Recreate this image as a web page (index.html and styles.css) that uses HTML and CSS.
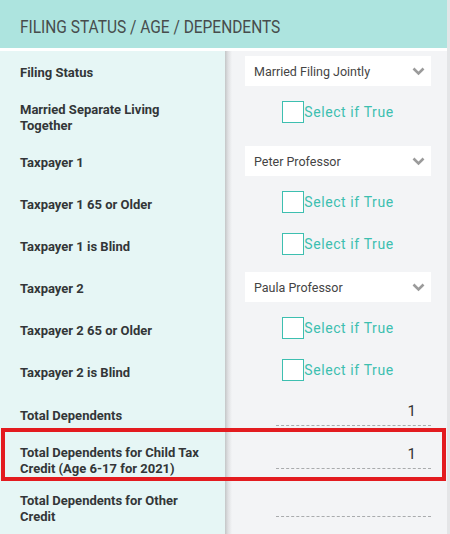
FILE: index.html
```html
<!DOCTYPE html>
<html lang="en">
<head>
    <meta charset="UTF-8">
    <meta name="viewport" content="width=device-width, initial-scale=1.0">
    <title>Filing Status</title>
    <link rel="stylesheet" href="styles.css">
</head>
<body>
    <div class="panel">
        <div class="panel-header">
            <span class="panel-title">FILING STATUS / AGE / DEPENDENTS</span>
        </div>
        <div class="panel-body">
            <div class="row">
                <div class="row-label">Filing Status</div>
                <div class="row-value">
                    <div class="dropdown">
                        <span>Married Filing Jointly</span>
                        <svg class="chevron" width="13" height="9" viewBox="0 0 13 9"><polyline points="1.5,1.5 6.5,6.5 11.5,1.5" fill="none" stroke="#9b9b9b" stroke-width="2.6"/></svg>
                    </div>
                </div>
            </div>
            <div class="row">
                <div class="row-label">Married Separate Living Together</div>
                <div class="row-value">
                    <label class="check"><span class="check-box"></span>Select if True</label>
                </div>
            </div>
            <div class="row">
                <div class="row-label">Taxpayer 1</div>
                <div class="row-value">
                    <div class="dropdown">
                        <span>Peter Professor</span>
                        <svg class="chevron" width="13" height="9" viewBox="0 0 13 9"><polyline points="1.5,1.5 6.5,6.5 11.5,1.5" fill="none" stroke="#9b9b9b" stroke-width="2.6"/></svg>
                    </div>
                </div>
            </div>
            <div class="row">
                <div class="row-label">Taxpayer 1 65 or Older</div>
                <div class="row-value">
                    <label class="check"><span class="check-box"></span>Select if True</label>
                </div>
            </div>
            <div class="row">
                <div class="row-label">Taxpayer 1 is Blind</div>
                <div class="row-value">
                    <label class="check"><span class="check-box"></span>Select if True</label>
                </div>
            </div>
            <div class="row">
                <div class="row-label">Taxpayer 2</div>
                <div class="row-value">
                    <div class="dropdown">
                        <span>Paula Professor</span>
                        <svg class="chevron" width="13" height="9" viewBox="0 0 13 9"><polyline points="1.5,1.5 6.5,6.5 11.5,1.5" fill="none" stroke="#9b9b9b" stroke-width="2.6"/></svg>
                    </div>
                </div>
            </div>
            <div class="row">
                <div class="row-label">Taxpayer 2 65 or Older</div>
                <div class="row-value">
                    <label class="check"><span class="check-box"></span>Select if True</label>
                </div>
            </div>
            <div class="row">
                <div class="row-label">Taxpayer 2 is Blind</div>
                <div class="row-value">
                    <label class="check"><span class="check-box"></span>Select if True</label>
                </div>
            </div>
            <div class="row row-total">
                <div class="row-label">Total Dependents</div>
                <div class="row-value">
                    <div class="number">1</div>
                </div>
            </div>
            <div class="row highlight">
                <div class="row-label">Total Dependents for Child Tax Credit (Age 6-17 for 2021)</div>
                <div class="row-value">
                    <div class="number">1</div>
                </div>
            </div>
            <div class="row">
                <div class="row-label">Total Dependents for Other Credit</div>
                <div class="row-value">
                    <div class="number"></div>
                </div>
            </div>
        </div>
    </div>
</body>
</html>
```

FILE: styles.css
```css
*{
    margin: 0;
    padding: 0;
    box-sizing: border-box;
}

body{
    font-family: Roboto, "Liberation Sans", sans-serif;
    background: #ffffff;
    width: 450px;
    height: 534px;
    overflow: hidden;
}

.panel{
    width: 450px;
    height: 534px;
    border-right: 3px solid #e4e5e7;
    display: flex;
    flex-direction: column;
}

.panel-header{
    height: 51px;
    background: #ade4df;
    border-bottom: 3px solid #ffffff;
    padding: 16px 0 0 20px;
}

.panel-title{
    display: inline-block;
    font-size: 18px;
    color: #474c4c;
    transform: scaleX(0.86);
    transform-origin: left center;
    white-space: nowrap;
}

.panel-body{
    flex: 1;
    background: linear-gradient(to right, #e6f6f5 225px, #c4c6c7 225px, #dfe0e2 228px, #f3f4f6 232px);
}

.row{
    display: flex;
    min-height: 42px;
}

.row-label{
    width: 225px;
    padding: 9px 20px 7px;
    display: flex;
    align-items: center;
    font-size: 13px;
    font-weight: 700;
    line-height: 16px;
    color: #333638;
}

.row-value{
    flex: 1;
    padding: 8px 16px 0 20px;
    display: flex;
    align-items: flex-start;
    justify-content: center;
}

.dropdown{
    width: 186px;
    height: 30px;
    margin-top: -3px;
    background: #ffffff;
    display: flex;
    align-items: center;
    justify-content: space-between;
    padding: 0 6px 0 9px;
    font-size: 12.5px;
    color: #444;
}

.check{
    display: flex;
    align-items: center;
    font-size: 14px;
    letter-spacing: 0.6px;
    color: #3dbfb0;
}

.check-box{
    width: 22px;
    height: 22px;
    background: #ffffff;
    border: 1.5px solid #3dbfb0;
}

.number{
    width: 155px;
    height: 24px;
    margin-top: 1px;
    margin-left: auto;
    border-bottom: 1px dashed #a9abad;
    text-align: right;
    padding-right: 15px;
    font-size: 15px;
    line-height: 18px;
    color: #333;
}

.row-total{
    min-height: 43px;
}

.highlight{
    position: relative;
    min-height: 48px;
}

.highlight::after{
    content: "";
    position: absolute;
    top: -8px;
    bottom: 3px;
    left: 1px;
    right: 1px;
    border: 4px solid #e31b1f;
    pointer-events: none;
}
```
